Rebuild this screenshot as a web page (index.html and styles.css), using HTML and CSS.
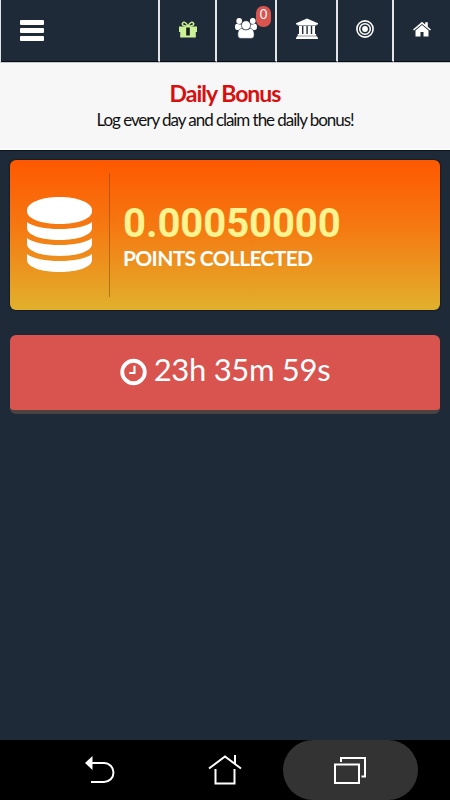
FILE: index.html
```html
<!DOCTYPE html>
<html lang="en">
<head>
  <meta charset="UTF-8">
  <title>Daily Bonus</title>
  <meta name="viewport" content="width=device-width,initial-scale=1">
  <link rel="stylesheet" href="styles.css">
</head>
<body>

<nav class="topbar">
  <a class="menu" aria-label="Menu">
    <svg width="24" height="21" viewBox="0 0 24 21" fill="#fff">
      <rect width="24" height="5" rx="1"/>
      <rect y="8" width="24" height="5" rx="1"/>
      <rect y="16" width="24" height="5" rx="1"/>
    </svg>
  </a>
  <a class="tab low" aria-label="Bonus">
    <svg width="18" height="17" viewBox="0 0 18 17">
      <path d="M0 5.500h18v5.500h-1.200V16.500H1.200V11H0z" fill="#cdf196"/>
      <path d="M8.500 5.300C4.500 5.300 2.800 4 3.400 2.400 4.200 .4 7 .8 9 5.200 11 .8 13.800 .4 14.600 2.400 15.200 4 13.500 5.300 9.500 5.300" fill="none" stroke="#cdf196" stroke-width="1.500"/>
      <path d="M7.200 6.500h3.600v8H7.200z" fill="#16201c"/>
    </svg>
  </a>
  <a class="tab" aria-label="Friends">
    <svg width="22" height="21" viewBox="0 0 22 21" fill="#fff">
      <circle cx="4.200" cy="3" r="2.900"/>
      <circle cx="17.800" cy="3" r="2.900"/>
      <path d="M0 9c0-2 .8-3.200 2-3.200 1.500 1 3.500 1 5 .4v5.800H2.200C.8 12 0 11 0 9zM22 9c0-2-.8-3.200-2-3.200-1.500 1-3.500 1-5 .4v5.800h4.800c1.400 0 2.200-1 2.200-3z"/>
      <path d="M2.800 17c0-4 1.300-6.500 4-6.500 2.500 1.500 5.900 1.500 8.400 0 2.700 0 4 2.500 4 6.500 0 2.200-1.200 3.400-3.200 3.400H6c-2 0-3.200-1.200-3.200-3.400z" stroke="#1f2a38" stroke-width=".6"/>
      <circle cx="11" cy="7.300" r="4.600" stroke="#1f2a38" stroke-width=".7"/>
    </svg>
    <span class="badge">0</span>
  </a>
  <a class="tab" aria-label="Bank">
    <svg width="22" height="22" viewBox="0 0 22 22" fill="#fff">
      <path d="M11 .5l11 4.700v1.400h-1.500v1H1.500v-1H0V5.200zM3 8h3v8h1.400V8h3v8h1.400V8h3v8h1.400V8H19v8h1.200v1.700H1.700V16H3zM.8 18.300h20.400V19.500H22V21H0v-1.500h.8z"/>
    </svg>
  </a>
  <a class="tab" aria-label="Offers">
    <svg width="18" height="18" viewBox="0 0 18 18" fill="none" stroke="#fff">
      <circle cx="9" cy="9" r="8.100" stroke-width="1.600"/>
      <circle cx="9" cy="9" r="5.300" stroke-width="1.500"/>
      <circle cx="9" cy="9" r="2.900" fill="#fff" stroke="none"/>
    </svg>
  </a>
  <a class="tab low" aria-label="Home">
    <svg width="18" height="17" viewBox="0 0 18 17" fill="#fff">
      <path d="M9 4l6.500 5.500V15.500h-5V11H7.500v4.500h-5v-6z"/>
      <path d="M9 .8l3.200 2.700V1.200h2.600v4.500L18 8.400l-1 1.200L9 2.900 1 9.600 0 8.400z"/>
    </svg>
  </a>
</nav>

<header class="title">
  <h1>Daily Bonus</h1>
  <p>Log every day and claim the daily bonus!</p>
</header>

<main>
  <section class="points">
    <div class="coins">
      <svg width="65" height="75" viewBox="0 0 65 75" fill="#fff">
        <path d="M0 13C0 6 14 0 32.500 0S65 6 65 13v1.500C65 21.500 51 27 32.500 27S0 21.500 0 14.500z"/>
        <path d="M0 25c6 4.700 18 7 32.500 7S59 29.700 65 25v6c0 7-14 12-32.500 12S0 38 0 31z"/>
        <path d="M0 41c6 4.700 18 7 32.500 7S59 45.700 65 41v6c0 7-14 12-32.500 12S0 54 0 47z"/>
        <path d="M0 57c6 4.700 18 7 32.500 7S59 61.700 65 57v6c0 7-14 12-32.500 12S0 70 0 63z"/>
      </svg>
    </div>
    <div class="count">
      <strong>0.00050000</strong>
      <span>POINTS COLLECTED</span>
    </div>
  </section>

  <div class="timer">
    <svg width="27" height="28" viewBox="0 0 28 28" fill="none" stroke="#fff">
      <circle cx="14" cy="14" r="11.700" stroke-width="4"/>
      <path d="M15 7.500V15H9.500" stroke-width="2.200"/>
    </svg>
    <span>23h 35m 59s</span>
  </div>
</main>

<footer class="softkeys">
  <a class="key" aria-label="Back">
    <svg width="30" height="28" viewBox="0 0 30 28">
      <path d="M0 7l7.500-7v14z" fill="#fff"/>
      <path d="M7 7h12a9.500 9.500 0 0 1 0 19H6" fill="none" stroke="#fff" stroke-width="2"/>
    </svg>
  </a>
  <a class="key home" aria-label="Home">
    <svg width="34" height="30" viewBox="0 0 34 30" fill="none" stroke="#fff" stroke-width="2">
      <path d="M1 13.500L17 1.500l16 12M27 9V0M7.500 14v14.500h19V14"/>
    </svg>
  </a>
  <a class="key recent" aria-label="Recent apps">
    <svg width="32" height="27" viewBox="0 0 32 27" fill="none" stroke="#fff" stroke-width="2">
      <path d="M1 7.500h24V26H1zM7 5V1h24v18.500h-3.500"/>
    </svg>
  </a>
</footer>

</body>
</html>
```
FILE: styles.css
```css
* { box-sizing:border-box; }
body { margin:0; height:800px; display:flex; flex-direction:column; overflow:hidden; background:#1f2a38; color:#fff; font-family:Lato,sans-serif; }
svg { display:block; flex:none; }
h1, p { margin:0; }

/* Top bar */
.topbar { display:grid; grid-template-columns:159px 57px 60px 61px 56px 1fr; height:63px; border-left:1px solid #dfe2e6; border-bottom:1px solid #c4c9d1; }
.topbar a { display:flex; align-items:center; justify-content:center; padding-bottom:4px; border-right:2px solid #e3e5e8; border-bottom:1px solid #070b12; }
.topbar a:last-child { border-right:0; }
.topbar .menu { justify-content:flex-start; padding-left:19px; padding-bottom:1px; }
.topbar .low { padding-bottom:3px; }
.tab { position:relative; }
.badge { position:absolute; top:6px; right:4px; width:15px; height:21px; border-radius:7px; background:#d9534f; font-size:13px; line-height:17px; text-align:center; }

/* Page title */
.title { height:87px; padding-top:16px; background:#f7f7f7; text-align:center; border-bottom:1px solid #fff; }
.title h1 { color:#d80f0f; font-size:23px; line-height:28px; font-weight:700; letter-spacing:-1px; }
.title p { color:#111; font-size:17px; line-height:25px; letter-spacing:-1.05px; }

main { flex:1; padding:9px 10px 10px; border-top:1px solid #0c121b; }

/* Points card */
.points { display:flex; align-items:center; height:150px; border-radius:6px; background:linear-gradient(#ff5800, #f57912 45%, #e1b12c); box-shadow:0 0 2px #000; }
.coins { display:flex; align-items:center; width:100px; height:124px; padding:0 0 2px 17px; border-right:1px solid rgba(120,60,0,.45); }
.count { display:grid; row-gap:1px; padding:5px 0 0 13px; white-space:nowrap; }
.count strong { color:#fff48f; font:700 40px/40px Roboto,sans-serif; letter-spacing:-.05px; }
.count span { font-size:21px; line-height:26px; font-weight:700; letter-spacing:-.68px; }

/* Countdown */
.timer { display:flex; align-items:center; justify-content:center; gap:7px; height:79px; margin-top:25px; padding-bottom:7px; border-bottom:4px solid #4b4242; border-radius:6px; background:#d9534f; font-size:31px; letter-spacing:-.3px; }
.timer svg { margin-top:6px; }

/* Android keys */
.softkeys { display:flex; justify-content:center; height:60px; background:#000; }
.key { display:flex; align-items:center; justify-content:center; flex:none; width:135px; }
.home { width:115px; }
.recent { border-radius:30px; background:#333; }
```
